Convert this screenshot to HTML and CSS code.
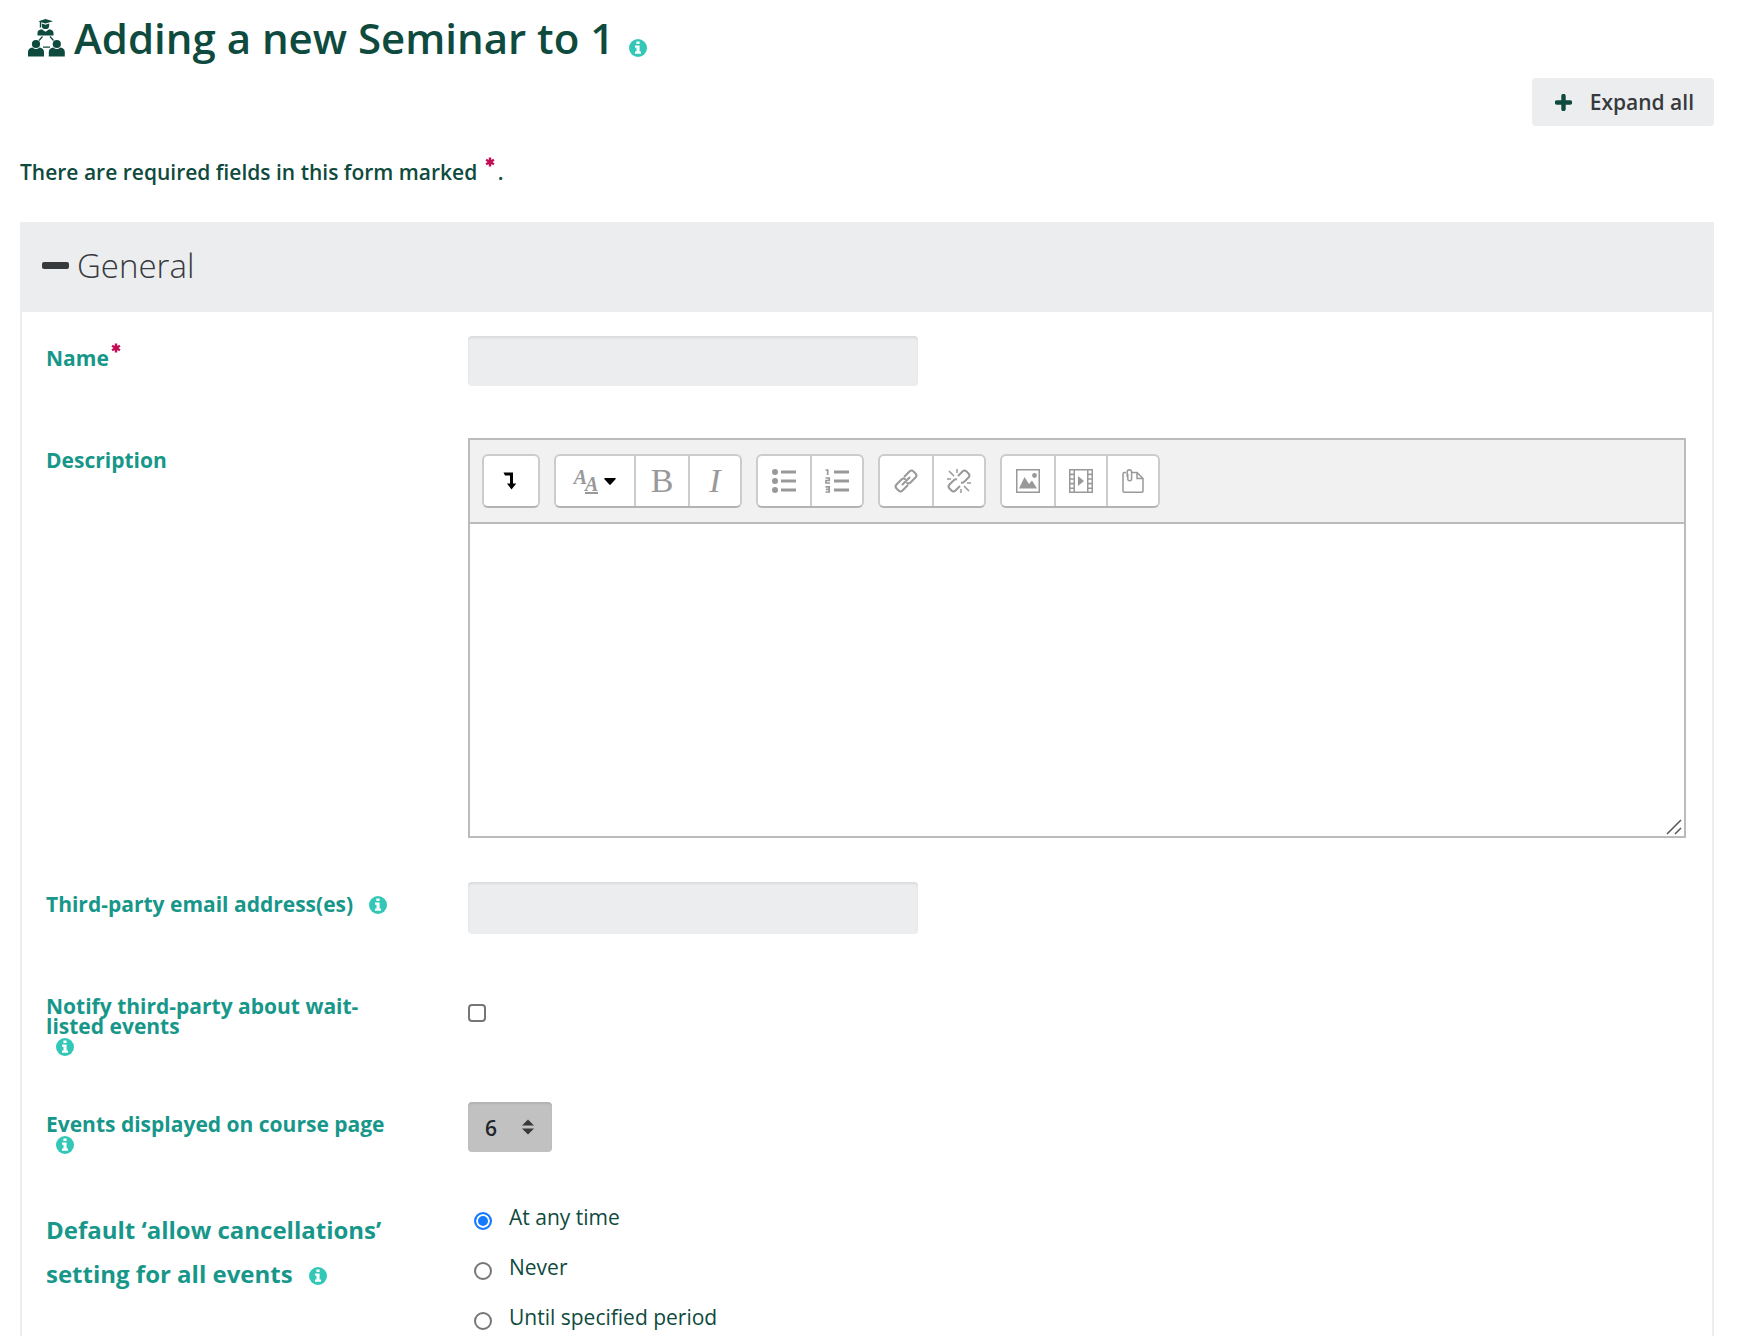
FILE: index.html
```html
<!DOCTYPE html>
<html lang="en">
<head>
<meta charset="utf-8">
<meta name="viewport" content="width=device-width, initial-scale=1">
<title>Adding a new Seminar to 1</title>
<link rel="stylesheet" href="styles.css">
</head>
<body>
<svg class="sprite" aria-hidden="true">
  <symbol id="i-info" viewBox="0 0 18 18">
    <circle cx="9" cy="9" r="9" fill="#33c7b8"/>
    <path fill="#fff" d="M7.4 2.4h3.200v2.600H7.400zM6 6.600h4.600v6H12V14.800H6v-2.200h1.500V8.800H6z"/>
  </symbol>
  <symbol id="i-star" viewBox="0 0 10 10">
    <path d="M5 .5v9M1.100 2.700l7.800 4.600M8.900 2.700L1.100 7.300" stroke="#c10b55" stroke-width="2.400" fill="none"/>
  </symbol>
</svg>

<main class="page">
  <h1 class="title">
    <svg class="title-icon" viewBox="0 0 37 38" aria-hidden="true">
      <g fill="#0f4a3e">
        <path d="M17.500 0L25 2.200 17.500 4.600l-4.300-1.400V8.500h-1.400V2.800L10.500 2.200z"/>
        <path d="M13.800 4.500l3.700 1.200 3.700-1.200v1.700a3.700 3.900 0 0 1-7.400 0z"/>
        <path d="M9.500 16.500v-2.700c0-2 1.500-3.200 4.300-3.600l3.700 2.500 3.700-2.500c2.800.4 4.300 1.600 4.300 3.600v2.700z"/>
        <circle cx="8" cy="25" r="4.100"/>
        <path d="M0 37.500v-4.500c0-2.700 1.600-4.200 4.500-4.600Q8 31.600 11.500 28.400c2.900.4 4.500 1.900 4.500 4.600v4.500z"/>
        <circle cx="28.800" cy="25" r="4.100"/>
        <path d="M20.800 37.500v-4.500c0-2.700 1.600-4.200 4.500-4.600q3.500 3.200 7 0c2.900.4 4.500 1.900 4.500 4.600v4.500z"/>
      </g>
      <path d="M14.500 17.500l-3.500 4M22 17.500l3.500 4M15 28.200h7" stroke="#0f4a3e" stroke-width="1.200"/>
    </svg>
    <span>Adding a new Seminar to 1</span>
    <button class="info info--title" type="button" aria-label="Help with Seminar"><svg><use href="#i-info"/></svg></button>
  </h1>

  <div class="actions">
    <button class="expand" type="button">
      <svg viewBox="0 0 17 17" aria-hidden="true"><path d="M8.500 2v13M2 8.500h13" stroke="#0f4a3e" stroke-width="4.400" stroke-linecap="round"/></svg>
      Expand all
    </button>
  </div>

  <p class="note">There are required fields in this form marked <svg class="star star--note" role="img" aria-label="required"><use href="#i-star"/></svg>.</p>

  <form class="card">
    <h2 class="card-head">
      <button class="toggle" type="button" aria-expanded="true"><span class="minus"></span>General</button>
    </h2>
    <div class="fields">
      <div class="row">
        <div class="label"><label for="name">Name</label><svg class="star" role="img" aria-label="required"><use href="#i-star"/></svg></div>
        <input class="text" id="name" type="text" required>
      </div>

      <div class="row row--editor">
        <div class="label"><label for="description">Description</label></div>
        <div class="editor">
          <div class="toolbar" role="toolbar" aria-label="Formatting">
            <div class="group">
              <button class="tool tool--more" type="button" aria-label="Show more buttons"><svg viewBox="0 0 24 24"><path d="M4.500 3.500h9.500v11h3.300L12.500 20.500 8 14.500h3V6.500H6z" fill="#000"/></svg></button>
            </div>
            <div class="group">
              <button class="tool tool--style" type="button" aria-label="Paragraph styles">
                <span class="aa"><i>A</i><i class="aa-low">A</i></span>
                <svg class="caret" viewBox="0 0 12 7"><path d="M1 0h10q1 0 .7 1L6.700 6.600q-.7.700-1.400 0L.3 1Q0 0 1 0z" fill="#000"/></svg>
              </button>
              <button class="tool" type="button" aria-label="Bold"><span class="glyph">B</span></button>
              <button class="tool" type="button" aria-label="Italic"><i class="glyph">I</i></button>
            </div>
            <div class="group">
              <button class="tool" type="button" aria-label="Unordered list"><svg viewBox="0 0 24 24"><g fill="#999"><circle cx="3" cy="3" r="3"/><circle cx="3" cy="12" r="3"/><circle cx="3" cy="21" r="3"/><path d="M9 1.500h15v3H9zM9 10.500h15v3H9zM9 19.500h15v3H9z"/></g></svg></button>
              <button class="tool" type="button" aria-label="Ordered list"><svg viewBox="0 0 24 24"><path d="M9 1.500h15v3H9zM9 10.500h15v3H9zM9 19.500h15v3H9z" fill="#999"/><path d="M.5 1h2.200v5M.5 9h3.700v2.500H1V14h4M.5 17.800h3.700V23H.5M1 20.400h3" fill="none" stroke="#999" stroke-width="1.700"/></svg></button>
            </div>
            <div class="group">
              <button class="tool" type="button" aria-label="Link"><svg viewBox="0 0 24 24"><g fill="none" stroke="#999" stroke-width="2" stroke-linecap="round"><path d="M10.500 7.500l5-5q2-2 4 0l2 2q2 2 0 4l-5 5q-1.500 1.500-3.500.5"/><path d="M13.500 16.500l-5 5q-2 2-4 0l-2-2q-2-2 0-4l5-5q1.500-1.500 3.500-.5"/><path d="M8.500 15.500l7-7"/></g></svg></button>
              <button class="tool" type="button" aria-label="Unlink"><svg viewBox="0 0 24 24"><g fill="none" stroke="#999" stroke-width="2"><path d="M11 7l4.500-4.500q2-2 4 0l2 2q2 2 0 4L17 13q-1.500 1-3 .5M13 17l-4.500 4.500q-2 2-4 0l-2-2q-2-2 0-4L7 11q1.500-1 3-.5"/><path stroke-width="1.500" d="M2 2l5 5M10 0v4M0 10h4M17 17l5 5M14 20v4M20 14h4"/></g></svg></button>
            </div>
            <div class="group">
              <button class="tool" type="button" aria-label="Image"><svg viewBox="0 0 24 24"><path d="M.75.75h22.500v22.500H.75z" fill="none" stroke="#999" stroke-width="1.500"/><path d="M3 19.500L8.500 8l4.500 7 3-3.500 5 8z" fill="#999"/><circle cx="18.500" cy="6.500" r="2.400" fill="#999"/></svg></button>
              <button class="tool" type="button" aria-label="Media"><svg viewBox="0 0 24 24"><path fill="#999" fill-rule="evenodd" d="M0 0h24v24H0zM6 1.500v21h12v-21zM1.500 1.500v3h3v-3zM1.500 6.200v3h3v-3zM1.500 10.800v3h3v-3zM1.500 15.400v3h3v-3zM1.500 20v2.500h3V20zM19.500 1.500v3h3v-3zM19.500 6.200v3h3v-3zM19.500 10.800v3h3v-3zM19.500 15.400v3h3v-3zM19.500 20v2.500h3V20z"/><path d="M9 7l6 5-6 5z" fill="#999"/></svg></button>
              <button class="tool" type="button" aria-label="Manage files"><svg viewBox="0 0 24 24"><g fill="none" stroke="#999" stroke-width="1.500"><path d="M5 3.500H3.500q-1.500 0-1.500 1.500V22q0 1.200 1.200 1.200h17.600q1.200 0 1.200-1.200V9.500l-6-6H11M16 3.500V9.500h6"/><path d="M6.200 8V3.200q0-2.400 2.200-2.400t2.200 2.400v6.500q0 2-1.900 2t-1.900-2V5"/></g></svg></button>
            </div>
          </div>
          <textarea class="area" id="description"></textarea>
          <svg class="grip" viewBox="0 0 16 16" aria-hidden="true"><path d="M1 15L15 1M9 15l6-6" stroke="#555" stroke-width="1.500"/></svg>
        </div>
      </div>

      <div class="row">
        <div class="label"><label for="emails">Third-party email address(es)</label> <button class="info" type="button" aria-label="Help with email addresses"><svg><use href="#i-info"/></svg></button></div>
        <input class="text text--tall" id="emails" type="text">
      </div>

      <div class="row row--check">
        <div class="label"><label for="notify">Notify third-party about wait-listed events</label> <button class="info" type="button" aria-label="Help with notifications"><svg><use href="#i-info"/></svg></button></div>
        <input class="check" id="notify" type="checkbox">
      </div>

      <div class="row row--select">
        <div class="label"><label for="events">Events displayed on course page</label> <button class="info" type="button" aria-label="Help with events displayed"><svg><use href="#i-info"/></svg></button></div>
        <div class="select-wrap">
          <select class="select" id="events">
            <option>1</option><option>2</option><option>3</option><option>4</option><option>5</option><option selected>6</option>
          </select>
          <svg class="sort" viewBox="0 0 12 16" aria-hidden="true"><path d="M0 6.500L6 .5l6 6zM0 9.500l6 6 6-6z" fill="#373a3c"/></svg>
        </div>
      </div>

      <div class="row">
        <div class="label label--large"><span id="cancel-label">Default ‘allow cancellations’ setting for all events</span> <button class="info" type="button" aria-label="Help with cancellations"><svg><use href="#i-info"/></svg></button></div>
        <div class="radios" role="radiogroup" aria-labelledby="cancel-label">
          <div class="option"><input id="c1" type="radio" name="cancel" checked><label for="c1">At any time</label></div>
          <div class="option"><input id="c2" type="radio" name="cancel"><label for="c2">Never</label></div>
          <div class="option"><input id="c3" type="radio" name="cancel"><label for="c3">Until specified period</label></div>
        </div>
      </div>
    </div>
  </form>
</main>
</body>
</html>
```

FILE: styles.css
```css
* { box-sizing: border-box; }

body {
  margin: 0;
  background: #fff;
  color: #0f4a3e;
  font-family: "Open Sans", "Noto Sans", sans-serif;
  font-size: 21px;
  line-height: 28px;
}

button, input, select, textarea { font: inherit; color: inherit; margin: 0; }
button { border: 0; padding: 0; background: none; cursor: pointer; }

.sprite { position: absolute; width: 0; height: 0; }

.page { padding: 9px 24px 0 20px; }

.title {
  display: flex;
  align-items: center;
  margin: 0;
  padding-left: 8px;
  font-size: 42px;
  font-weight: 600;
  line-height: 58px;
}
.title-icon { width: 37px; height: 38px; margin-right: 9px; }

.info {
  display: inline-block;
  width: 18px;
  height: 18px;
  margin-left: 10px;
  vertical-align: -2px;
}
.info svg { display: block; width: 18px; height: 18px; }
.info--title { margin: 20px 0 0 15px; }

.actions { display: flex; justify-content: flex-end; margin-top: 11px; }
.expand {
  display: flex;
  align-items: center;
  gap: 18px;
  height: 48px;
  padding: 0 20px 0 23px;
  border-radius: 4px;
  background: #ecedef;
  color: #373a3c;
  font-weight: 600;
}
.expand svg { width: 17px; height: 17px; }

.note { margin: 32px 0 36px; font-weight: 600; }

.star { width: 10px; height: 10px; margin: -12px 0 0 2px; vertical-align: 13px; }
.star--note { margin-right: 3px; }

.card { border: 2px solid #ecedee; border-top: 0; border-bottom: 0; }
.card-head { margin: 0 -2px; background: #ecedef; font-weight: 300; }
.toggle {
  display: flex;
  align-items: center;
  gap: 8px;
  width: 100%;
  height: 90px;
  padding: 0 22px 3px;
  color: #373a3c;
  font-size: 33px;
  font-weight: 300;
}
.minus { width: 27px; height: 7px; border-radius: 2px; background: #373a3c; }

.fields { padding: 24px 26px 0 24px; }
.row {
  display: grid;
  grid-template-columns: 1fr 3fr;
  column-gap: 16px;
  align-items: start;
  min-height: 52px;
  margin-bottom: 50px;
}
.row--editor { margin-bottom: 44px; }
.row--check { margin-bottom: 46px; }
.row--select { margin-bottom: 42px; }

.label {
  padding: 12px 50px 0 0;
  color: #17978a;
  font-weight: 700;
  line-height: 20px;
}
.label label { display: inline-block; }
.label--large { font-size: 24px; line-height: 44px; }

.text {
  width: 450px;
  max-width: 100%;
  height: 50px;
  padding: 0 16px;
  border: 0;
  border-radius: 4px;
  background: #ecedef;
  box-shadow: inset 0 2px 2px rgba(0, 0, 0, .08);
}
.text--tall { height: 52px; }

.editor { position: relative; border: 2px solid #bbb; }
.toolbar {
  display: flex;
  flex-wrap: wrap;
  gap: 14px;
  padding: 14px 12px;
  border-bottom: 2px solid #bbb;
  background: #f1f1f1;
}
.group {
  display: flex;
  border: 2px solid #ccc;
  border-bottom-color: #b3b3b3;
  border-radius: 6px;
  background: #fff;
}
.tool {
  display: flex;
  align-items: center;
  justify-content: center;
  width: 52px;
  height: 50px;
}
.tool + .tool { border-left: 2px solid #ccc; }
.tool svg { width: 24px; height: 24px; }
.tool--more { width: 54px; }
.tool--style { width: 78px; gap: 6px; }
.tool--style + .tool { width: 54px; }
.tool .caret { width: 12px; height: 7px; }
.glyph { color: #999; font-family: "Liberation Serif", serif; font-size: 34px; }
.aa {
  display: flex;
  color: #999;
  font-family: "Liberation Serif", serif;
  font-size: 20px;
  font-weight: 700;
  line-height: 16px;
}
.aa-low { margin: 7px 0 0 -2px; height: 18px; border-bottom: 2px solid #999; }

.area {
  display: block;
  width: 100%;
  height: 312px;
  padding: 12px;
  border: 0;
  resize: none;
}
.grip { position: absolute; right: 2px; bottom: 1px; width: 16px; height: 16px; }

.check, .option input {
  appearance: none;
  width: 18px;
  height: 18px;
  border: 2px solid #767676;
  background: #fff;
}
.check { margin-top: 20px; border-radius: 4px; }
.check:checked { border-color: #147aff; background: #147aff; }

.select-wrap { position: relative; width: 84px; }
.select {
  width: 100%;
  height: 50px;
  padding: 2px 17px 0;
  border: 0;
  border-radius: 4px;
  appearance: none;
  background: #c1c1c1;
  box-shadow: inset 0 2px 2px rgba(0, 0, 0, .08);
  color: #212529;
  font-weight: 600;
}
.sort { position: absolute; right: 18px; top: 17px; width: 12px; height: 16px; pointer-events: none; }

.option { display: flex; align-items: center; height: 50px; padding-left: 6px; }
.option input { border-radius: 50%; }
.option input:checked {
  border-color: #147aff;
  background: #147aff;
  box-shadow: inset 0 0 0 2px #fff;
}
.option label { padding: 0 0 8px 17px; }
```
